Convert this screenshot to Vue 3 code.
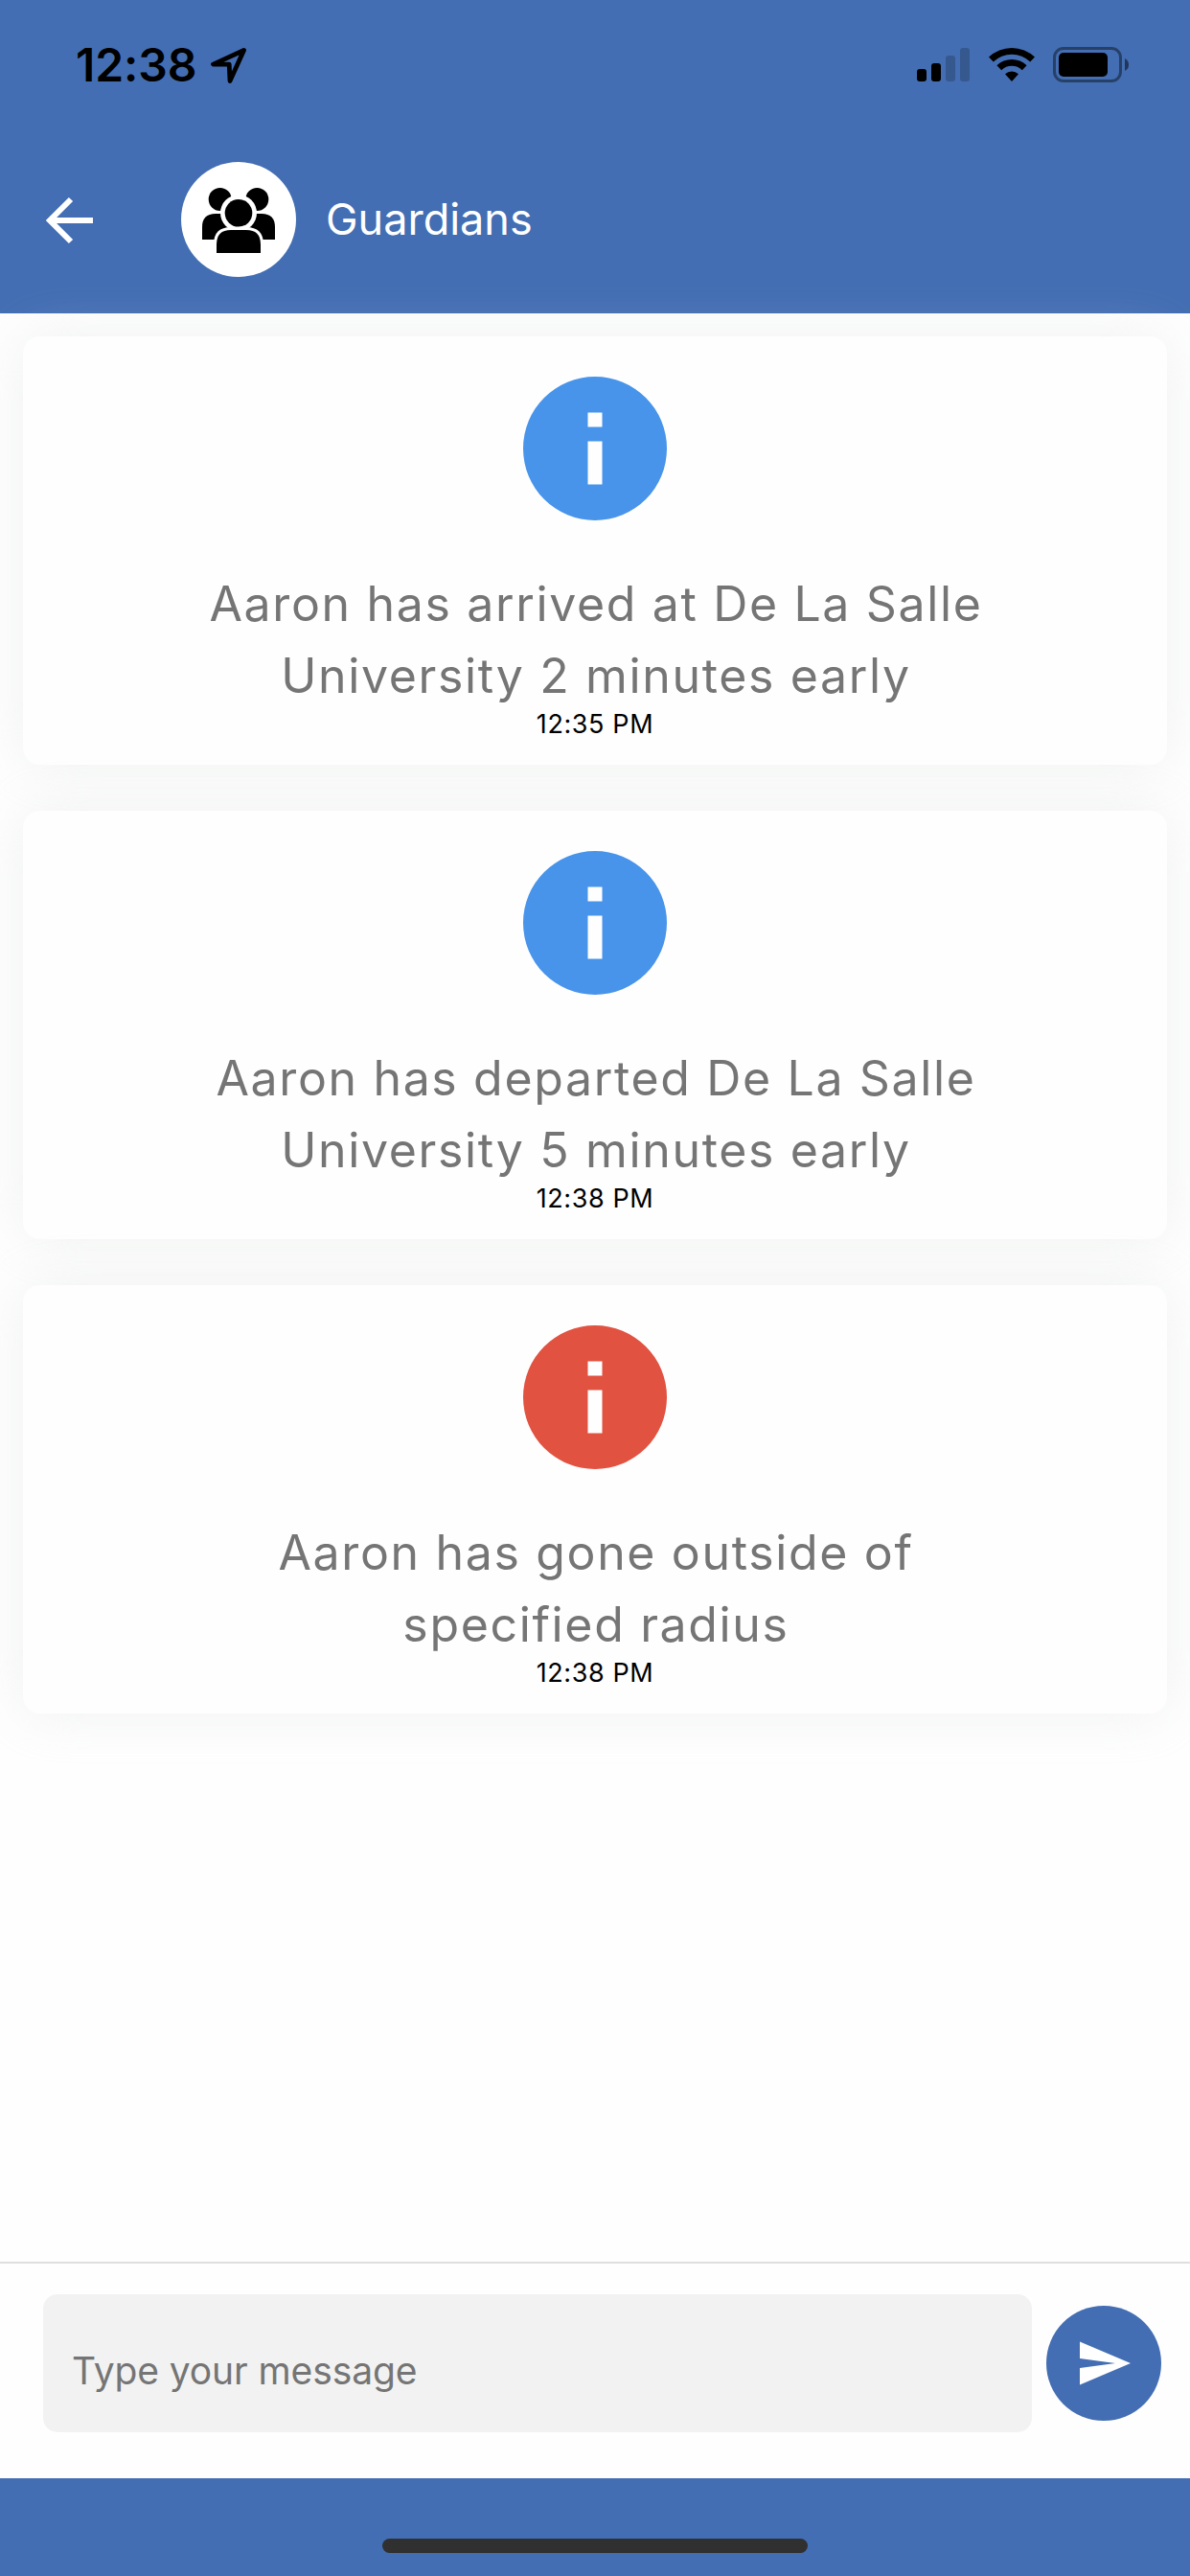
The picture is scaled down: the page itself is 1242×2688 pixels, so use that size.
<template>
  <div class="screen">
    <header class="header">
      <div class="status">
        <span class="clock">12:38</span>
        <svg class="location" width="40" height="39" viewBox="0 0 40 39">
          <path d="M35.5 3.5 3.5 18.100H20.200L21 35.500Z" />
        </svg>
        <div class="status-icons">
          <svg width="55" height="37" viewBox="0 0 55 37">
            <rect x="0" y="23" width="10" height="13" rx="3" />
            <rect x="15" y="17" width="10" height="19" rx="3" />
            <rect x="30" y="9" width="10" height="27" rx="3" opacity=".2" />
            <rect x="45" y="1" width="10" height="35" rx="3" opacity=".2" />
          </svg>
          <svg class="wifi" width="48" height="37" viewBox="0 0 48 37">
            <path d="M0 10.6A34.5 34.5 0 0 1 48 10.6L43.2 15.5A27.5 27.5 0 0 0 4.8 15.5Z" />
            <path d="M8.4 19.2A22.6 22.6 0 0 1 39.6 19.2L34.8 24.2A15.6 15.6 0 0 0 13.2 24.2Z" />
            <path d="M17 28.2A10.6 10.6 0 0 1 31 28.2L24 36Z" />
          </svg>
          <svg width="80" height="37" viewBox="0 0 80 37">
            <rect x="1.5" y="1.5" width="69" height="34" rx="9.5" fill="none" stroke="#000" stroke-width="3"
              opacity=".42" />
            <rect x="6" y="6" width="51" height="25" rx="5" />
            <path d="M75 12Q79 14 79 18.5T75 25Z" opacity=".5" />
          </svg>
        </div>
      </div>
      <div class="bar">
        <svg class="back" width="50" height="50" viewBox="0 0 50 50">
          <path d="M26 3 4 25 26 47M4 25H49" />
        </svg>
        <div class="avatar">
          <svg width="120" height="120" viewBox="0 0 120 120">
            <circle cx="40.7" cy="39" r="12" />
            <circle cx="79.3" cy="39" r="12" />
            <path d="M22 81V68Q22 54 36 54H84Q98 54 98 68V81Z" />
            <path class="cut" d="M37 95V86Q37 71 52 71H68Q83 71 83 86V95Z" />
            <circle class="gap" cx="60" cy="53.3" r="19" />
            <circle cx="60" cy="53.3" r="14.3" />
            <path d="M37 95V86Q37 71 52 71H68Q83 71 83 86V95Z" />
          </svg>
        </div>
        <h1 class="title">Guardians</h1>
      </div>
    </header>

    <main class="messages">
      <article class="card" v-for="message in messages" :key="message.id">
        <svg class="info" :class="message.type" width="150" height="150" viewBox="2 2 20 20">
          <path
            d="M12 2a10 10 0 1 0 0 20 10 10 0 0 0 0-20zm1 15h-2v-6h2v6zm0-8h-2V7h2v2z" />
        </svg>
        <p class="text">
          <span v-for="line in message.lines" :key="line">{{ line }}</span>
        </p>
        <time class="time">{{ message.time }}</time>
      </article>
    </main>

    <form class="composer" @submit.prevent="sendMessage">
      <input class="input" v-model="draft" type="text" placeholder="Type your message">
      <button class="send" type="submit" aria-label="Send">
        <svg width="54" height="46" viewBox="0 0 54 46">
          <path d="M0 0.5 53 23 0 45.5V28L37 23 0 18Z" />
        </svg>
      </button>
    </form>

    <footer class="footer">
      <div class="home"></div>
    </footer>
  </div>
</template>

<script setup>
import { ref } from 'vue';

const draft = ref('');
const messages = ref([
  { id: 1, type: 'notice', lines: ['Aaron has arrived at De La Salle', 'University 2 minutes early'], time: '12:35 PM' },
  { id: 2, type: 'notice', lines: ['Aaron has departed De La Salle', 'University 5 minutes early'], time: '12:38 PM' },
  { id: 3, type: 'alert', lines: ['Aaron has gone outside of', 'specified radius'], time: '12:38 PM' }
]);

function sendMessage() {
  if (!draft.value) return;
  messages.value.push({
    id: messages.value.length + 1,
    type: 'notice',
    lines: [draft.value],
    time: new Date().toLocaleTimeString('en-US', { hour: 'numeric', minute: '2-digit' })
  });
  draft.value = '';
}
</script>

<style>
body {
  margin: 0;
  background: #fff;
}
</style>

<style scoped>
.screen {
  display: flex;
  flex-direction: column;
  width: 1242px;
  height: 2688px;
  overflow: hidden;
  background: #fefefe;
  font-family: Inter, 'Liberation Sans', sans-serif;
}

svg {
  display: block;
  flex: none;
}

.header {
  flex: none;
  height: 327px;
  background: #436eb3;
}

.status {
  display: flex;
  align-items: center;
  height: 135px;
  padding: 0 63px 0 79px;
}

.clock {
  width: 140px;
  font-size: 48px;
  font-weight: 600;
  line-height: 58px;
  letter-spacing: -0.1px;
  color: #000;
}

.location {
  margin-top: 2px;
}

.location path {
  fill: none;
  stroke: #000;
  stroke-width: 4.8;
  stroke-linejoin: round;
}

.status-icons {
  display: flex;
  margin-left: auto;
}

.wifi {
  margin: 0 19px 0 20px;
}

.bar {
  display: flex;
  align-items: center;
  height: 188px;
  padding-left: 48px;
}

.back {
  margin-top: 2px;
}

.back path {
  fill: none;
  stroke: #fff;
  stroke-width: 6;
}

.avatar {
  width: 120px;
  height: 120px;
  margin-left: 91px;
  border-radius: 50%;
  background: #fff;
}

.avatar .cut {
  fill: #fff;
  stroke: #fff;
  stroke-width: 6;
}

.avatar .gap {
  fill: #fff;
}

.title {
  margin: 0 0 0 31px;
  font-size: 45px;
  font-weight: 400;
  line-height: 54px;
  color: #fff;
}

.messages {
  display: flex;
  flex: 1;
  flex-direction: column;
  gap: 48px;
  padding: 24px;
}

.card {
  display: flex;
  flex-direction: column;
  align-items: center;
  box-sizing: border-box;
  height: 447px;
  padding-top: 42px;
  border-radius: 18px;
  background: #fefefe;
  box-shadow: 0 0 56px rgba(208, 214, 210, 0.32);
}

.notice {
  fill: #4894ea;
}

.alert {
  fill: #e15241;
}

.text {
  display: flex;
  flex-direction: column;
  align-items: center;
  margin: 50px 0 0;
  padding-left: 2px;
  font-size: 50px;
  line-height: 75px;
  letter-spacing: 1.65px;
  color: #757575;
  white-space: nowrap;
}

.time {
  margin-top: -4px;
  font-size: 27px;
  line-height: 33px;
  letter-spacing: 0.6px;
  color: #000;
}

.composer {
  display: flex;
  flex: none;
  box-sizing: border-box;
  height: 226px;
  padding: 32px 30px 0 45px;
  border-top: 2px solid #dedfde;
  background: #fefefe;
}

.input {
  box-sizing: border-box;
  width: 1032px;
  height: 144px;
  padding: 15px 30px 0;
  border: none;
  border-radius: 15px;
  outline: none;
  background: #f2f2f2;
  font-family: inherit;
  font-size: 39px;
  letter-spacing: -0.1px;
  color: #000;
}

.input::placeholder {
  color: #757575;
  opacity: 1;
}

.send {
  display: flex;
  align-items: center;
  width: 120px;
  height: 120px;
  margin: 12px 0 0 15px;
  padding: 0 0 0 35px;
  border: none;
  border-radius: 50%;
  background: #436eb3;
}

.send svg {
  fill: #fff;
}

.footer {
  display: flex;
  flex: none;
  justify-content: center;
  align-items: flex-start;
  box-sizing: border-box;
  height: 102px;
  padding-top: 63px;
  background: #436eb3;
}

.home {
  width: 444px;
  height: 15px;
  border-radius: 8px;
  background: #303030;
}
</style>
